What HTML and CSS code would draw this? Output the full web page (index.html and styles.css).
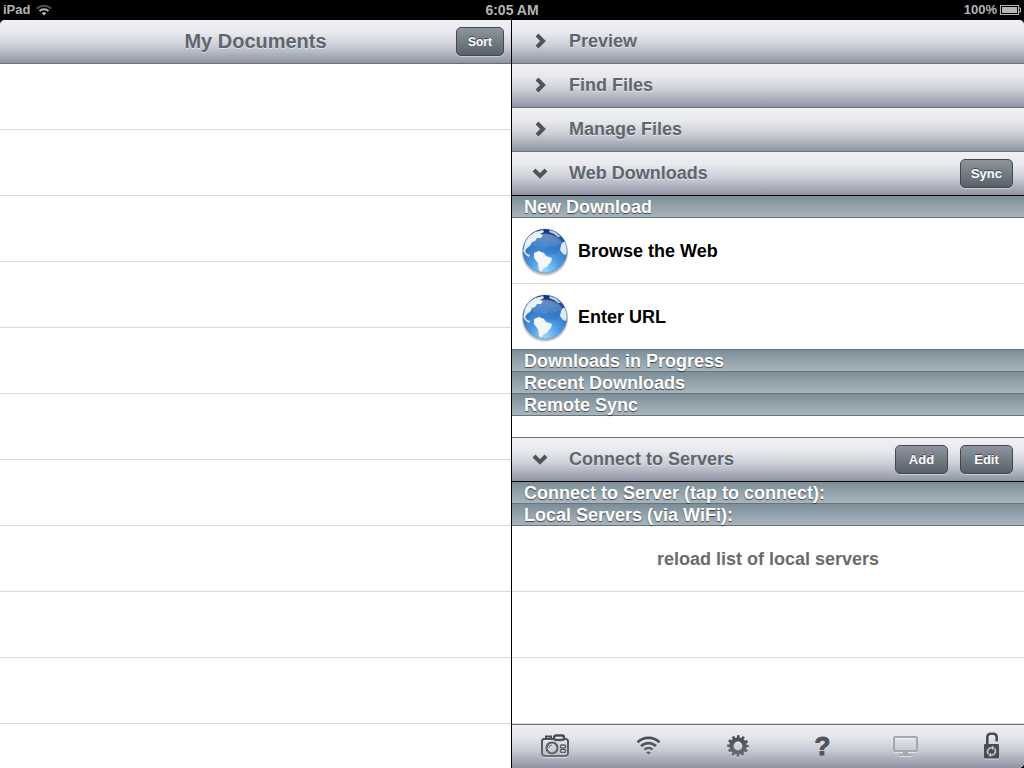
FILE: index.html
```html
<!DOCTYPE html>
<html lang="en">
<head>
    <meta charset="UTF-8">
    <title>My Documents</title>
    <link rel="stylesheet" href="styles.css">
</head>
<body>
    <!-- shared drawings -->
    <svg class="defs" width="0" height="0" aria-hidden="true">
        <defs>
            <radialGradient id="ocean" cx="0.5" cy="0.95" r="0.95">
                <stop offset="0" stop-color="#8fd8ff"/>
                <stop offset="0.35" stop-color="#4f9ee6"/>
                <stop offset="0.75" stop-color="#2d6cba"/>
                <stop offset="1" stop-color="#0d2a72"/>
            </radialGradient>
            <linearGradient id="gloss" x1="0" y1="0" x2="0" y2="1">
                <stop offset="0" stop-color="#fff" stop-opacity="0.35"/>
                <stop offset="1" stop-color="#fff" stop-opacity="0.05"/>
            </linearGradient>
            <linearGradient id="ink" x1="0" y1="0" x2="0" y2="24" gradientUnits="userSpaceOnUse">
                <stop offset="0" stop-color="#45494e"/>
                <stop offset="1" stop-color="#6c727b"/>
            </linearGradient>
            <clipPath id="disc"><circle cx="24" cy="24" r="22"/></clipPath>
            <symbol id="globe" viewBox="0 0 48 50">
                <circle cx="24" cy="26" r="23" fill="#000" opacity="0.12"/>
                <circle cx="24" cy="25" r="23" fill="#000" opacity="0.14"/>
                <circle cx="24" cy="24" r="22" fill="url(#ocean)"/>
                <g clip-path="url(#disc)">
                    <path d="M19 23l6-2 5-5 4 4 4 3-3 4-6 1-5-1z" fill="#1c5dab" opacity="0.25"/>
                    <path d="M3 21l1-6 4-6 6-4 8-2 1 2-4 2 3 1-2 3-4 0-2 3-3 1-2 4-3 2-2 3 2 3 3 1-1 2-3-2-3-4z" fill="#e6eff8"/>
                    <path d="M29 3l6 2 5 5-3 0-4-3-5-2z" fill="#b9cde4"/>
                    <path d="M13 26l5-2 5 2 2 3 6 2-1 4-3 3-1 2-3 1-3 4-2-2-1-7-4-5z" fill="#f3f7fb"/>
                    <path d="M42 15l3 0 2 8-2 5-3-1-3-4 1-5z" fill="#dce9f7"/>
                </g>
                <path d="M6 17a19 15 0 0 1 36 0q-18 7-36 0z" fill="url(#gloss)"/>
                <circle cx="24" cy="24" r="22" fill="none" stroke="#3b73ba" stroke-opacity="0.4"/>
            </symbol>
        </defs>
    </svg>

    <div class="status-bar">
        <div class="status-left">
            <span>iPad</span>
            <svg width="16" height="12" viewBox="0 0 16 12" fill="none" stroke="#b5b5b5" stroke-width="2">
                <path d="M1 4.5a10 10 0 0 1 14 0" stroke="#4d4d4d"/>
                <path d="M3.5 7a6.5 6.5 0 0 1 9 0"/>
                <path d="M8 11.5L5.8 9.3a3 3 0 0 1 4.4 0z" fill="#b5b5b5" stroke="none"/>
            </svg>
        </div>
        <div class="clock">6:05 AM</div>
        <div class="status-right">
            <span>100%</span>
            <svg width="21" height="10" viewBox="0 0 21 10">
                <rect x="0.5" y="0.5" width="18" height="9" fill="none" stroke="#b5b5b5"/>
                <rect x="2" y="2" width="15" height="6" fill="#b5b5b5"/>
                <path d="M19 3h1.5v4H19" fill="none" stroke="#b5b5b5"/>
            </svg>
        </div>
    </div>

    <div class="app">
        <section class="documents">
            <header class="bar">
                <h1>My Documents</h1>
                <button type="button" class="btn btn-small">Sort</button>
            </header>
            <ul class="rows">
                <li class="row"></li>
                <li class="row"></li>
                <li class="row"></li>
                <li class="row"></li>
                <li class="row"></li>
                <li class="row"></li>
                <li class="row"></li>
                <li class="row"></li>
                <li class="row"></li>
                <li class="row"></li>
                <li class="row"></li>
            </ul>
        </section>

        <section class="panel">
            <div class="panel-body">
                <div class="bar">
                    <button type="button" class="toggle" aria-expanded="false">
                        <svg class="arrow" width="18" height="18" viewBox="0 0 18 18"><path d="M6 3l6 6-6 6"/></svg>
                        Preview
                    </button>
                </div>
                <div class="bar">
                    <button type="button" class="toggle" aria-expanded="false">
                        <svg class="arrow" width="18" height="18" viewBox="0 0 18 18"><path d="M6 3l6 6-6 6"/></svg>
                        Find Files
                    </button>
                </div>
                <div class="bar">
                    <button type="button" class="toggle" aria-expanded="false">
                        <svg class="arrow" width="18" height="18" viewBox="0 0 18 18"><path d="M6 3l6 6-6 6"/></svg>
                        Manage Files
                    </button>
                </div>

                <div class="bar open">
                    <button type="button" class="toggle" aria-expanded="true">
                        <svg class="arrow" width="18" height="18" viewBox="0 0 18 18"><path d="M3 6l6 6 6-6"/></svg>
                        Web Downloads
                    </button>
                    <button type="button" class="btn">Sync</button>
                </div>
                <h2>New Download</h2>
                <ul class="rows">
                    <li class="row">
                        <a href="#browse">
                            <svg width="48" height="50"><use href="#globe"/></svg>
                            Browse the Web
                        </a>
                    </li>
                    <li class="row last">
                        <a href="#url">
                            <svg width="48" height="50"><use href="#globe"/></svg>
                            Enter URL
                        </a>
                    </li>
                </ul>
                <h2>Downloads in Progress</h2>
                <h2>Recent Downloads</h2>
                <h2>Remote Sync</h2>
                <div class="spacer"></div>

                <div class="bar open">
                    <button type="button" class="toggle" aria-expanded="true">
                        <svg class="arrow" width="18" height="18" viewBox="0 0 18 18"><path d="M3 6l6 6 6-6"/></svg>
                        Connect to Servers
                    </button>
                    <button type="button" class="btn">Add</button>
                    <button type="button" class="btn">Edit</button>
                </div>
                <h2>Connect to Server (tap to connect):</h2>
                <h2>Local Servers (via WiFi):</h2>
                <ul class="rows">
                    <li class="row"><button type="button" class="reload">reload list of local servers</button></li>
                    <li class="row"></li>
                    <li class="row"></li>
                </ul>
            </div>

            <nav class="toolbar">
                <button type="button" aria-label="Camera">
                    <svg width="30" height="24" viewBox="0 0 30 24" fill="none" stroke="url(#ink)" stroke-width="2">
                        <path d="M14 5H4Q2 5 2 7.500V19q0 3 3 3h20q3 0 3-3V7.500Q28 5 25.500 5H24"/>
                        <path d="M6 4V2.500h5V4"/>
                        <rect x="14" y="1.500" width="10" height="4.500" rx="2" stroke-width="2.400"/>
                        <circle cx="12" cy="14" r="5.500" stroke-width="2.200"/>
                        <path d="M9 14a3 3 0 0 1 3-3" stroke-width="1"/>
                        <rect x="20.500" y="11" width="5" height="3" rx="1" stroke-width="1.600"/>
                        <rect x="20.500" y="15.500" width="5" height="3" rx="1" stroke-width="1.600"/>
                    </svg>
                </button>
                <button type="button" aria-label="WiFi">
                    <svg width="25" height="24" viewBox="0 0 25 24" fill="none" stroke="url(#ink)" stroke-width="2.800">
                        <path d="M1.500 8.500a15.500 15.500 0 0 1 22 0"/>
                        <path d="M5 12.300a10.500 10.500 0 0 1 15 0"/>
                        <path d="M8.500 15.800a5.700 5.700 0 0 1 8 0"/>
                        <path d="M12.500 21l-2.500-2.500a3.400 3.400 0 0 1 5 0z" fill="url(#ink)" stroke="none"/>
                    </svg>
                </button>
                <button type="button" aria-label="Settings">
                    <svg width="22" height="24" viewBox="0 0 22 24" fill="none" stroke="url(#ink)">
                        <circle cx="11" cy="12" r="6.600" stroke-width="4.400"/>
                        <circle cx="11" cy="12" r="9.300" stroke-width="3" stroke-dasharray="2.700 2.170" stroke-dashoffset="1.350"/>
                    </svg>
                </button>
                <button type="button" class="help" aria-label="Help">?</button>
                <button type="button" aria-label="Display" disabled>
                    <svg width="25" height="24" viewBox="0 0 25 24" fill="none" stroke="#a5a8b0">
                        <rect x="1" y="3" width="23" height="14" rx="1.500" stroke-width="2.200"/>
                        <path d="M12.500 18v3" stroke-width="5"/>
                        <path d="M6.500 21h12" stroke-width="2"/>
                    </svg>
                </button>
                <button type="button" aria-label="Unlock">
                    <svg width="15" height="28" viewBox="0 0 15 28" fill="none">
                        <path d="M3.300 13V5.500q0-3.700 3.700-3.700h2q3.700 0 3.700 3.700V9.500" stroke="#484c51" stroke-width="2.600"/>
                        <rect x="0" y="12" width="15" height="14.500" rx="1" fill="#484c51"/>
                        <path d="M4.300 22a4 4 0 0 1 4.200-6.200M10.700 16.800a4 4 0 0 1-4.200 6.200" stroke="#b9bbbf" stroke-width="1.800"/>
                        <path d="M8 13.500l3 2.400-3 2.400zM7 20.500l-3 2.400 3 2.400z" fill="#b9bbbf"/>
                    </svg>
                </button>
            </nav>
        </section>
    </div>
</body>
</html>
```
FILE: styles.css
```css
* {
    box-sizing: border-box;
}
body {
    display: flex;
    flex-direction: column;
    height: 100vh;
    margin: 0;
    overflow: hidden;
    background: #000;
    font-family: "Liberation Sans", Arial, Helvetica, sans-serif;
    font-weight: bold;
}
h1, h2, ul {
    margin: 0;
    padding: 0;
}
button {
    padding: 0;
    border: 0;
    background: none;
    font: inherit;
}
svg {
    display: block;
    flex: none;
}
.defs {
    position: absolute;
}

/* status bar */
.status-bar {
    display: grid;
    grid-template-columns: 1fr auto 1fr;
    align-items: center;
    height: 20px;
    padding: 0 3px;
    color: #b5b5b5;
    font-size: 13px;
    line-height: 20px;
}
.status-left,
.status-right {
    display: flex;
    align-items: center;
    gap: 6px;
}
.status-right {
    justify-content: flex-end;
    gap: 3px;
}
.clock {
    font-size: 14px;
}

/* two columns */
.app {
    flex: 1;
    display: grid;
    grid-template-columns: 1fr 1fr;
    min-height: 0;
    overflow: hidden;
    border-radius: 5px 5px 5px 0;
    background: #fff;
}
.documents,
.panel {
    display: flex;
    flex-direction: column;
    min-width: 0;
    min-height: 0;
}
.documents {
    overflow: hidden;
    border-right: 1px solid #000;
}
.panel-body {
    flex: 1;
    min-height: 0;
    overflow: hidden;
}
.bar {
    flex: none;
    display: flex;
    align-items: center;
    gap: 12px;
    height: 44px;
    padding-right: 11px;
    border-bottom: 1px solid #6a6e78;
    background: linear-gradient(#f1f1f4 0%, #e8e9ed 30%, #cbced6 60%, #8f94a3 100%);
    color: #5f666e;
    text-shadow: 0 1px 0 rgba(255, 255, 255, 0.5);
}
.bar.open {
    border-bottom-color: #000;
}
.documents .bar {
    display: grid;
    grid-template-columns: 1fr auto 1fr;
    gap: 0;
    padding-right: 7px;
    padding-left: 7px;
}
.bar h1 {
    grid-column: 2;
    padding-bottom: 2px;
    font-size: 20px;
    line-height: 24px;
}
.documents .btn {
    justify-self: end;
}
.toggle {
    flex: 1;
    display: flex;
    align-items: center;
    gap: 20px;
    height: 43px;
    padding-bottom: 2px;
    padding-left: 19px;
    color: inherit;
    font-size: 18px;
    line-height: 20px;
    text-align: left;
    text-shadow: inherit;
}
.arrow {
    fill: none;
    stroke: #505459;
    stroke-width: 4;
}
.btn {
    width: 53px;
    height: 29px;
    border: 1px solid #43494f;
    border-radius: 5px;
    background: linear-gradient(#8f969d, #737b83 50%, #586169);
    box-shadow: 0 1px 0 rgba(255, 255, 255, 0.4);
    color: #fff;
    font-size: 13px;
    text-shadow: 0 -1px 0 rgba(0, 0, 0, 0.5);
}
.btn-small {
    width: 48px;
    font-size: 12px;
}
h2 {
    height: 22px;
    padding-left: 12px;
    border-bottom: 1px solid #66747d;
    background: linear-gradient(#7c8e98, #a9b5bd);
    color: #fff;
    font-size: 18px;
    line-height: 22px;
    text-shadow: 0 1px 1px rgba(0, 0, 0, 0.6);
}

/* lists */
.rows {
    list-style: none;
}
.row {
    display: flex;
    height: 66px;
    border-bottom: 1px solid #d9d9d9;
    font-size: 18px;
}
.row.last {
    border-bottom-color: #66747d;
}
.row a,
.reload {
    flex: 1;
    padding-top: 2px;
}
.row a {
    display: flex;
    align-items: center;
    gap: 9px;
    padding-left: 9px;
    color: #000;
    text-decoration: none;
}
.reload {
    color: #6b6b6b;
}
.spacer {
    height: 22px;
    border-bottom: 1px solid #6a6e78;
}

/* bottom toolbar */
.toolbar {
    flex: none;
    display: flex;
    align-items: center;
    justify-content: space-between;
    height: 44px;
    padding: 0 25px 1px 28px;
    border-top: 1px solid #707176;
    background: linear-gradient(#eeeef1 0%, #e4e5e9 30%, #c6c9d2 60%, #8f94a3 100%);
}
.toolbar svg {
    filter: drop-shadow(0 1px 0 rgba(255, 255, 255, 0.5));
}
.help {
    width: 13px;
    color: #505459;
    font-size: 26px;
    line-height: 26px;
    -webkit-text-stroke: 1px #505459;
}
```
